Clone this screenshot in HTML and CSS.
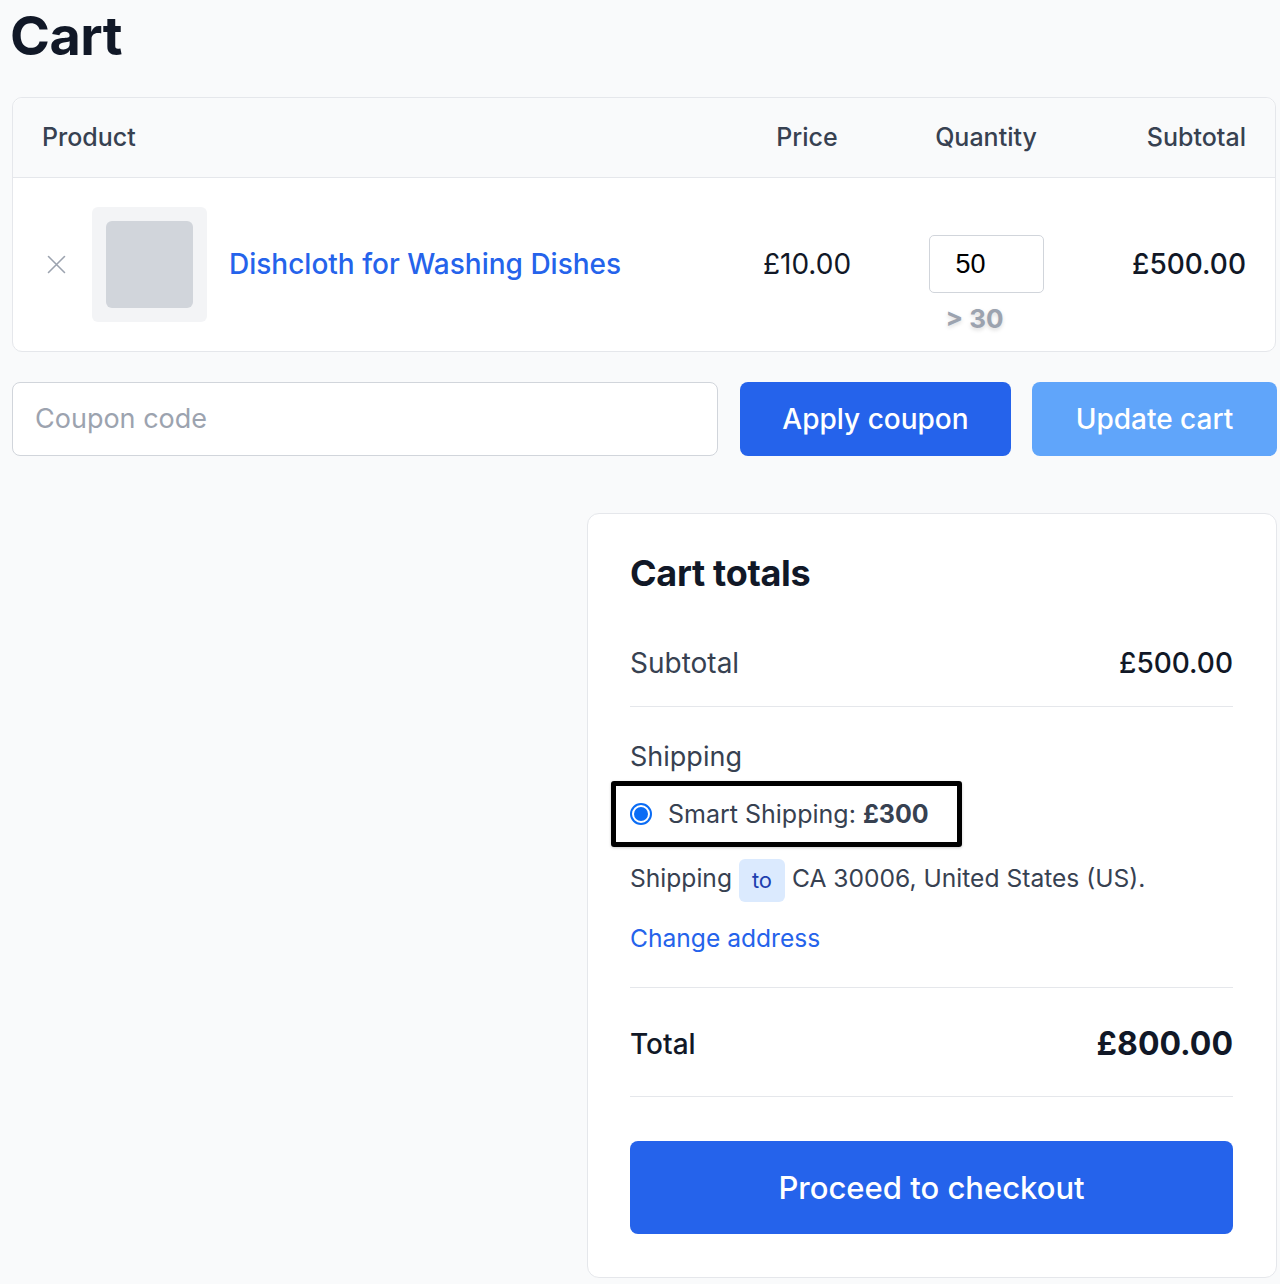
FILE: index.html
```html
<!DOCTYPE html>
<html lang="en">
<head>
<meta charset="utf-8">
<title>Cart</title>
<link rel="stylesheet" href="styles.css">
</head>
<body>
<main class="page">
  <h1 class="page-title">Cart</h1>

  <section class="cart-table">
    <div class="cart-head">
      <div class="col-product">Product</div>
      <div class="col-center">Price</div>
      <div class="col-center">Quantity</div>
      <div class="col-right">Subtotal</div>
    </div>
    <div class="cart-row">
      <div class="col-product product-cell">
        <button class="remove" aria-label="Remove item">
          <svg width="19" height="19" viewBox="0 0 19 19"><path d="M1.5 1.5 L17.5 17.5 M17.5 1.5 L1.5 17.5" stroke="#9ca3af" stroke-width="1.6" fill="none" stroke-linecap="round"/></svg>
        </button>
        <div class="thumb"><div class="thumb-inner"></div></div>
        <a href="#" class="product-name">Dishcloth for Washing Dishes</a>
      </div>
      <div class="col-center price">£10.00</div>
      <div class="col-center qty-cell">
        <div class="qty-wrap">
          <input class="qty" type="text" value="50">
          <span class="qty-note">&gt; 30</span>
        </div>
      </div>
      <div class="col-right line-total">£500.00</div>
    </div>
  </section>

  <section class="coupon-row">
    <input class="coupon" type="text" placeholder="Coupon code">
    <button class="btn btn-primary">Apply coupon</button>
    <button class="btn btn-light">Update cart</button>
  </section>

  <section class="totals">
    <h2 class="totals-title">Cart totals</h2>
    <div class="totals-row">
      <span class="label">Subtotal</span>
      <span class="value">£500.00</span>
    </div>
    <div class="shipping">
      <div class="label">Shipping</div>
      <div class="ship-option">
        <span class="radio"><span class="radio-dot"></span></span>
        <span class="ship-text">Smart Shipping: <strong>£300</strong></span>
      </div>
      <p class="ship-dest">Shipping <span class="pill">to</span> CA 30006, United States (US).</p>
      <a href="#" class="change-addr">Change address</a>
    </div>
    <div class="totals-row total">
      <span class="total-label">Total</span>
      <span class="total-value">£800.00</span>
    </div>
    <button class="checkout">Proceed to checkout</button>
  </section>
</main>
</body>
</html>
```
FILE: styles.css
```css
* { box-sizing: border-box; }
html, body { margin: 0; padding: 0; }
body {
  background: #f9fafb;
  font-family: Inter, "Noto Sans", "Liberation Sans", sans-serif;
  color: #374151;
}
.page {
  padding: 4px 3px 0 12px;
}
.page-title {
  margin: 0 0 28px -2px;
  font-size: 54px;
  line-height: 1.2;
  font-weight: 700;
  color: #111827;
  letter-spacing: -0.5px;
}
.cart-table {
  background: #fff;
  border: 1px solid #e5e7eb;
  border-radius: 10px;
  margin-right: 1px;
}
.cart-head, .cart-row {
  display: grid;
  grid-template-columns: 1fr 160px 198px 161px;
  padding: 0 29px;
  align-items: center;
}
.cart-head {
  background: #f9fafb;
  border-bottom: 1px solid #e5e7eb;
  border-radius: 10px 10px 0 0;
  height: 80px;
  font-size: 25px;
  font-weight: 500;
  color: #374151;
}
.col-center { text-align: center; }
.col-right { text-align: right; }
.cart-row {
  height: 173px;
  font-size: 28px;
  color: #111827;
}
.product-cell {
  display: flex;
  align-items: center;
}
.remove {
  background: none;
  border: 0;
  padding: 0;
  margin: 0 26px 0 5px;
  width: 19px;
  height: 19px;
  display: flex;
}
.thumb {
  width: 115px;
  height: 115px;
  background: #f3f4f6;
  border-radius: 6px;
  padding: 14px;
  margin-right: 22px;
}
.thumb-inner {
  width: 100%;
  height: 100%;
  background: #d1d5db;
  border-radius: 6px;
}
.product-name {
  color: #2563eb;
  text-decoration: none;
  font-size: 28px;
  font-weight: 500;
}
.price { font-weight: 400; }
.qty-cell { display: flex; justify-content: center; }
.qty-wrap { position: relative; }
.qty {
  width: 115px;
  height: 58px;
  border: 1px solid #d1d5db;
  border-radius: 5px;
  padding: 0 0 0 26px;
  font-family: "Liberation Sans", Arial, sans-serif;
  font-size: 27px;
  color: #000;
  background: #fff;
  display: block;
}
.qty-note {
  position: absolute;
  left: 17px;
  top: 68px;
  font-size: 26px;
  font-weight: 700;
  color: #9ca3af;
  text-shadow: 0 2px 4px rgba(0,0,0,0.15);
  white-space: nowrap;
}
.line-total { font-weight: 500; }

.coupon-row {
  display: flex;
  margin-top: 30px;
  height: 74px;
}
.coupon {
  width: 706px;
  height: 74px;
  border: 1px solid #d1d5db;
  border-radius: 8px;
  background: #fff;
  padding: 0 22px;
  font-family: Inter, "Noto Sans", sans-serif;
  font-size: 27px;
  color: #111827;
}
.coupon::placeholder { color: #9ca3af; }
.btn {
  height: 74px;
  border: 0;
  border-radius: 8px;
  font-family: Inter, "Noto Sans", sans-serif;
  font-size: 28px;
  font-weight: 500;
  color: #fff;
}
.btn-primary {
  background: #2563eb;
  width: 271px;
  margin-left: 22px;
}
.btn-light {
  background: #60a5fa;
  width: 245px;
  margin-left: 21px;
}

.totals {
  width: 690px;
  margin: 57px 0 0 auto;
  background: #fff;
  border: 1px solid #e5e7eb;
  border-radius: 12px;
  padding: 37px 43px 43px 42px;
}
.totals-title {
  margin: 0;
  font-size: 36px;
  line-height: 44px;
  font-weight: 700;
  color: #111827;
  letter-spacing: -0.3px;
}
.totals-row {
  display: flex;
  justify-content: space-between;
  align-items: center;
  font-size: 28px;
  line-height: 40px;
  padding: 48px 0 23px;
  border-bottom: 1px solid #e5e7eb;
}
.label { color: #374151; }
.value { color: #111827; font-weight: 500; }
.shipping {
  padding: 30px 0 29px;
  border-bottom: 1px solid #e5e7eb;
  font-size: 27px;
  line-height: 40px;
}
.ship-option {
  display: inline-flex;
  align-items: center;
  margin: 4px 0 0 -19px;
  border: 5px solid #000;
  border-radius: 3px;
  padding: 9px 28px 9px 14px;
  box-shadow: 0 1px 3px rgba(0,0,0,0.2);
}
.radio {
  width: 22px;
  height: 22px;
  border: 2px solid #0a6cf5;
  border-radius: 50%;
  display: flex;
  align-items: center;
  justify-content: center;
  margin-right: 16px;
}
.radio-dot {
  width: 14px;
  height: 14px;
  border-radius: 50%;
  background: #0a6cf5;
}
.ship-text {
  font-size: 25px;
  line-height: 38px;
  color: #374151;
}
.ship-text strong { font-weight: 700; }
.ship-dest {
  margin: 11px 0 0;
  color: #374151;
  font-size: 24.6px;
}
.pill {
  display: inline-block;
  background: #dbeafe;
  color: #1e40af;
  border-radius: 6px;
  padding: 1px 13px 2px;
  line-height: 40px;
  font-size: 22px;
  vertical-align: middle;
}
.change-addr {
  display: inline-block;
  margin-top: 16px;
  color: #2563eb;
  text-decoration: none;
  font-size: 24.6px;
}
.totals-row.total {
  padding: 36px 0 32px;
}
.total-label {
  font-size: 28px;
  font-weight: 500;
  color: #111827;
}
.total-value {
  font-size: 32px;
  font-weight: 700;
  color: #111827;
}
.checkout {
  display: block;
  width: 100%;
  height: 93px;
  margin-top: 44px;
  border: 0;
  border-radius: 8px;
  background: #2563eb;
  color: #fff;
  font-family: Inter, "Noto Sans", sans-serif;
  font-size: 31px;
  font-weight: 500;
}
```
